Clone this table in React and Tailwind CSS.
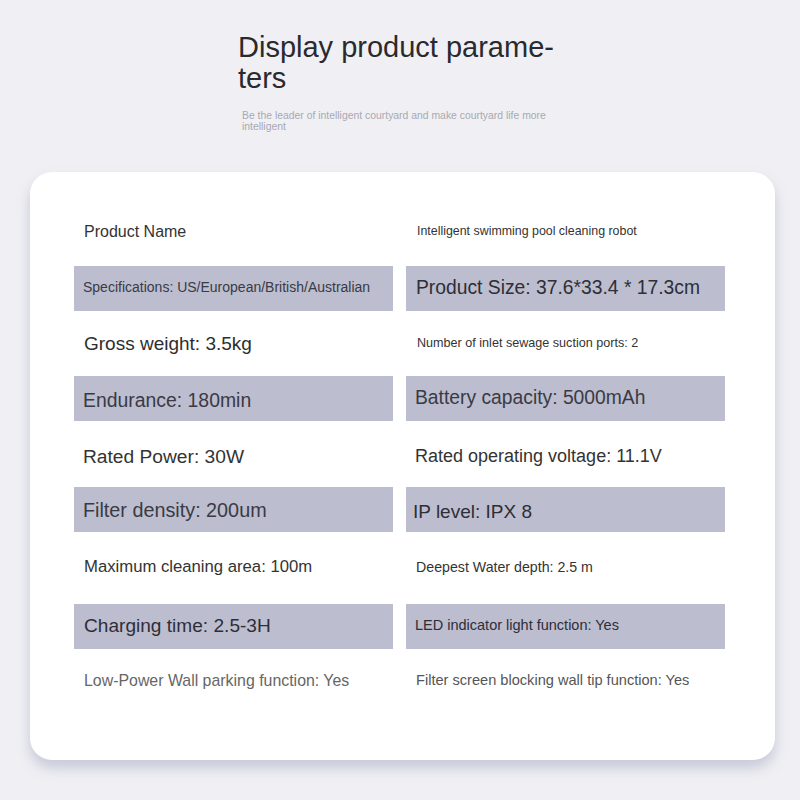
import React from "react";

const F = { fontFamily: '"Liberation Sans", Arial, sans-serif' };

function Cell({ shaded, children, className = "" }) {
  return (
    <div
      className={
        "w-[319px] h-[45px] flex items-center overflow-hidden whitespace-nowrap " +
        (shaded ? "bg-[#bcbdcf] " : "") +
        className
      }
    >
      {children}
    </div>
  );
}

export default function App() {
  return (
    <div className="w-[800px] h-[800px] bg-[#f0f0f4] overflow-hidden" style={F}>
      <div className="pt-[32px] pl-[238px]">
        <div className="text-[29px] leading-[31px] text-[#2a2a2e]">
          Display product parame-
          <br />
          ters
        </div>
      </div>
      <div className="mt-[16px] ml-[242px] w-[330px] text-[10.4px] leading-[11px] text-[#a8a8b2]">
        Be the leader of intelligent courtyard and make courtyard life more intelligent
      </div>

      <div className="mt-[40px] ml-[30px] w-[745px] h-[588px] bg-white rounded-[22px] shadow-[0_8px_14px_rgba(150,150,185,0.45)] pt-[37px] pl-[44px]">
        <div className="flex gap-[13px]">
          <Cell className="pl-[10px] text-[16px] text-[#333]">Product Name</Cell>
          <Cell className="pl-[11px] text-[12.4px] text-[#333]">Intelligent swimming pool cleaning robot</Cell>
        </div>
        <div className="flex gap-[13px] mt-[12px]">
          <Cell shaded className="pl-[9px] text-[14px] text-[#3a3a44]"><span className="-mt-[2px]">Specifications: US/European/British/Australian</span></Cell>
          <Cell shaded className="pl-[10px] text-[19.3px] text-[#2e2e36]">Product Size: 37.6*33.4 * 17.3cm</Cell>
        </div>
        <div className="flex gap-[13px] mt-[9px]">
          <Cell className="pl-[10px] text-[19px] text-[#2e2e2e]"><span className="mt-[3px]">Gross weight: 3.5kg</span></Cell>
          <Cell className="pl-[11px] text-[12.6px] text-[#333]"><span className="mt-[1px]">Number of inlet sewage suction ports: 2</span></Cell>
        </div>
        <div className="flex gap-[13px] mt-[11px]">
          <Cell shaded className="pl-[9px] text-[19.4px] text-[#3a3a44]"><span className="mt-[4px]">Endurance: 180min</span></Cell>
          <Cell shaded className="pl-[9px] text-[19.3px] text-[#3a3a44]"><span className="-mt-[1px]">Battery capacity: 5000mAh</span></Cell>
        </div>
        <div className="flex gap-[13px] mt-[13px]">
          <Cell className="pl-[9px] text-[19.2px] text-[#333]"><span className="mt-[2px]">Rated Power: 30W</span></Cell>
          <Cell className="pl-[9px] text-[18px] text-[#333]">Rated operating voltage: 11.1V</Cell>
        </div>
        <div className="flex gap-[13px] mt-[8px]">
          <Cell shaded className="pl-[9px] text-[19.8px] text-[#3a3a44]"><span className="mt-[3px]">Filter density: 200um</span></Cell>
          <Cell shaded className="pl-[7px] text-[19px] text-[#2e2e36]"><span className="mt-[6px]">IP level: IPX 8</span></Cell>
        </div>
        <div className="flex gap-[13px] mt-[12px]">
          <Cell className="pl-[10px] text-[16.7px] text-[#333]"><span className="mt-[1px]">Maximum cleaning area: 100m</span></Cell>
          <Cell className="pl-[10px] text-[14.2px] text-[#333]"><span className="mt-[2px]">Deepest Water depth: 2.5 m</span></Cell>
        </div>
        <div className="flex gap-[13px] mt-[15px]">
          <Cell shaded className="pl-[10px] text-[19.1px] text-[#2e2e38]"><span className="-mt-[1px]">Charging time: 2.5-3H</span></Cell>
          <Cell shaded className="pl-[9px] text-[14.5px] text-[#2e2e38]"><span className="-mt-[1px]">LED indicator light function: Yes</span></Cell>
        </div>
        <div className="flex gap-[13px] mt-[9px]">
          <Cell className="pl-[10px] text-[15.9px] text-[#666]"><span className="mt-[1px]">Low-Power Wall parking function: Yes</span></Cell>
          <Cell className="pl-[10px] text-[14.6px] text-[#555]"><span className="mt-[1px]">Filter screen blocking wall tip function: Yes</span></Cell>
        </div>
      </div>
    </div>
  );
}
